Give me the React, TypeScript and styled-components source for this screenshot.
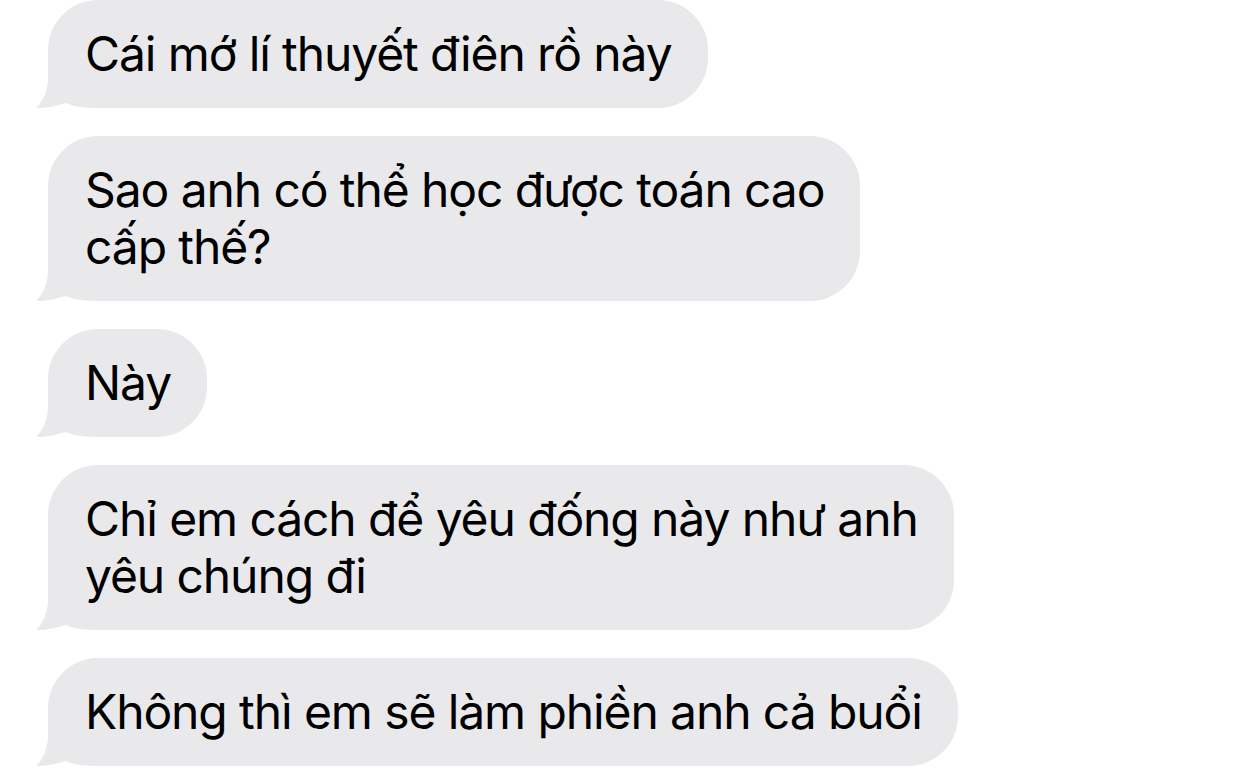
import { createGlobalStyle, styled } from 'styled-components';

const GlobalStyle = createGlobalStyle`
    html,
    body {
        margin: 0;
        padding: 0;
        background: #ffffff;
    }

    body {
        width: 1242px;
        height: 772px;
        overflow: hidden;
    }
`;

const BUBBLE_GREY = '#e9e9eb';

const Thread = styled.div`
    display: flex;
    flex-direction: column;
    align-items: flex-start;
    gap: 28px;
    padding: 0 0 0 48px;
    box-sizing: border-box;
`;

const Bubble = styled.div`
    position: relative;
    isolation: isolate;
    background: ${BUBBLE_GREY};
    border-radius: 50px;
    padding: 25px 36px 26px 37px;

    color: #000;
    font-family: Inter, 'Noto Sans', sans-serif;
    font-size: 48px;
    font-weight: 400;
    line-height: 57px;
    letter-spacing: -1.1px;
    white-space: nowrap;
`;

const Line = styled.span`
    display: block;
`;

const Tail = styled.svg`
    position: absolute;
    z-index: -1;
    left: -12px;
    bottom: 0;
    width: 70px;
    height: 60px;
    overflow: visible;
`;

function BubbleTail() {
    return (
        <Tail viewBox="0 0 70 60" aria-hidden="true">
            <path
                d="M12 0 L12 28 C12 44 7 53 0 60 C10 60 20 58 30 55 C38 59 48 60 70 60 L70 0 Z"
                fill={BUBBLE_GREY}
            />
        </Tail>
    );
}

const messages: string[][] = [
    ['Cái mớ lí thuyết điên rồ này'],
    ['Sao anh có thể học được toán cao', 'cấp thế?'],
    ['Này'],
    ['Chỉ em cách để yêu đống này như anh', 'yêu chúng đi'],
    ['Không thì em sẽ làm phiền anh cả buổi'],
];

export default function App() {
    return (
        <>
            <GlobalStyle />
            <Thread>
                {messages.map((lines, i) => (
                    <Bubble key={i}>
                        <BubbleTail />
                        {lines.map((line) => (
                            <Line key={line}>{line}</Line>
                        ))}
                    </Bubble>
                ))}
            </Thread>
        </>
    );
}
